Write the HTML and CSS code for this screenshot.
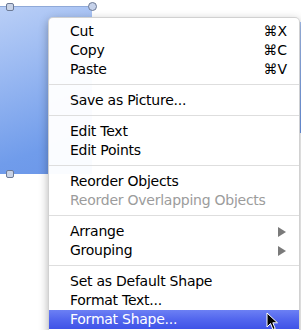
FILE: index.html
```html
<!DOCTYPE html>
<html lang="en">
<head>
    <meta charset="UTF-8">
    <title>Shape menu</title>
    <link rel="stylesheet" href="styles.css">
</head>
<body>
    <div class="canvas">
        <div class="shape">
            <span class="handle handle-tl"></span>
            <span class="handle handle-bl"></span>
            <span class="handle handle-rot"></span>
        </div>
        <div class="shape-edge"></div>

        <div class="menu">
            <div class="menu-item"><span>Cut</span><span class="key">⌘X</span></div>
            <div class="menu-item"><span>Copy</span><span class="key">⌘C</span></div>
            <div class="menu-item"><span>Paste</span><span class="key">⌘V</span></div>
            <div class="menu-sep"></div>
            <div class="menu-item"><span>Save as Picture...</span></div>
            <div class="menu-sep"></div>
            <div class="menu-item"><span>Edit Text</span></div>
            <div class="menu-item"><span>Edit Points</span></div>
            <div class="menu-sep"></div>
            <div class="menu-item"><span>Reorder Objects</span></div>
            <div class="menu-item disabled"><span>Reorder Overlapping Objects</span></div>
            <div class="menu-sep"></div>
            <div class="menu-item"><span>Arrange</span><span class="arrow"></span></div>
            <div class="menu-item"><span>Grouping</span><span class="arrow"></span></div>
            <div class="menu-sep"></div>
            <div class="menu-item"><span>Set as Default Shape</span></div>
            <div class="menu-item"><span>Format Text...</span></div>
            <div class="menu-item active"><span>Format Shape...</span></div>
        </div>

        <svg class="pointer" width="14" height="20" viewBox="0 0 14 20">
            <path d="M1 1 L1 15 L4.5 11.5 L7 17.5 L9.2 16.5 L6.8 10.8 L11.5 10.8 Z" fill="#000" stroke="#fff" stroke-width="1"/>
        </svg>
    </div>
</body>
</html>
```

FILE: styles.css
```css
body {
    margin: 0;
    padding: 0;
    background-color: #fff;
    font-family: "DejaVu Sans", sans-serif;
}
.canvas {
    position: relative;
    width: 301px;
    height: 330px;
    overflow: hidden;
    background-color: #fff;
}
.shape {
    position: absolute;
    left: -30px;
    top: 6px;
    width: 122px;
    height: 167px;
    background: linear-gradient(160deg, #bed2f7 0%, #9dbbf2 35%, #709ceb 80%, #6b96e8 100%);
    border-top: 1px solid #8fa9d8;
}
.handle {
    position: absolute;
    width: 6px;
    height: 6px;
    background-color: #c9d3e6;
    border: 1px solid #6c7a95;
    border-radius: 2px;
}
.handle-tl {
    left: 36px;
    top: -4px;
}
.handle-bl {
    left: 36px;
    top: 163px;
}
.handle-rot {
    left: 118px;
    top: -5px;
    width: 7px;
    height: 7px;
    border-radius: 50%;
    background-color: #c6d2ea;
}
.shape-edge {
    position: absolute;
    left: 299px;
    top: 22px;
    width: 4px;
    height: 111px;
    background: linear-gradient(180deg, #a9c3f3, #6e99e9);
}
.menu {
    position: absolute;
    left: 48px;
    top: 17px;
    width: 250px;
    padding: 4px 0;
    background-color: rgba(255, 255, 255, 0.97);
    border: 1px solid rgba(0, 0, 0, 0.18);
    border-radius: 5px 5px 0 0;
    box-shadow: 0 3px 10px rgba(0, 0, 0, 0.3);
    font-size: 14px;
    letter-spacing: -0.25px;
    color: #000;
}
.menu-item {
    display: flex;
    justify-content: space-between;
    align-items: center;
    height: 19px;
    line-height: 19px;
    padding: 0 12px 0 21px;
    white-space: nowrap;
}
.menu-item.disabled {
    color: #9c9c9c;
}
.menu-item.active {
    color: #fff;
    background: linear-gradient(180deg, #6c80f4 0%, #5266ee 50%, #3f53e7 100%);
}
.key {
    font-size: 14px;
    letter-spacing: 0;
}
.arrow {
    width: 0;
    height: 0;
    margin-right: 1px;
    border-top: 5px solid transparent;
    border-bottom: 5px solid transparent;
    border-left: 8px solid #7a7a7a;
}
.menu-sep {
    height: 1px;
    margin: 5px 0 6px;
    background-color: #dedede;
}
.pointer {
    position: absolute;
    left: 266px;
    top: 312px;
}
```
